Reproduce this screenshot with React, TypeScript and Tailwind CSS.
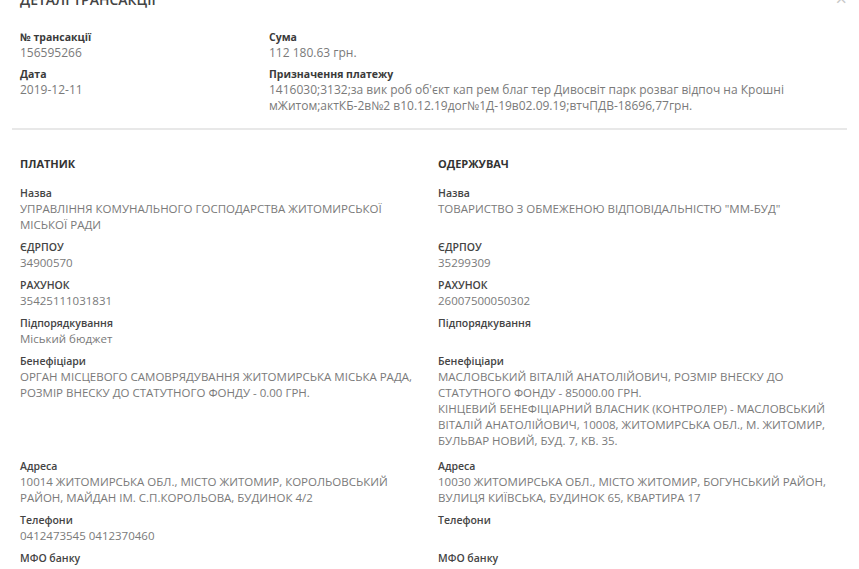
import React from "react";

type Field = { label: string; value?: string[] };

const topLeft: Field[] = [
  { label: "№ трансакції", value: ["156595266"] },
  { label: "Дата", value: ["2019-12-11"] },
];

const topRight: Field[] = [
  { label: "Сума", value: ["112 180.63 грн."] },
  {
    label: "Призначення платежу",
    value: [
      "1416030;3132;за вик роб об'єкт кап рем благ тер Дивосвіт парк розваг відпоч на Крошні мЖитом;актКБ-2в№2 в10.12.19дог№1Д-19в02.09.19;втчПДВ-18696,77грн.",
    ],
  },
];

const rows: [Field, Field][] = [
  [
    { label: "Назва", value: ["УПРАВЛІННЯ КОМУНАЛЬНОГО ГОСПОДАРСТВА ЖИТОМИРСЬКОЇ МІСЬКОЇ РАДИ"] },
    { label: "Назва", value: ['ТОВАРИСТВО З ОБМЕЖЕНОЮ ВІДПОВІДАЛЬНІСТЮ "ММ-БУД"'] },
  ],
  [
    { label: "ЄДРПОУ", value: ["34900570"] },
    { label: "ЄДРПОУ", value: ["35299309"] },
  ],
  [
    { label: "РАХУНОК", value: ["35425111031831"] },
    { label: "РАХУНОК", value: ["26007500050302"] },
  ],
  [
    { label: "Підпорядкування", value: ["Міський бюджет"] },
    { label: "Підпорядкування" },
  ],
  [
    {
      label: "Бенефіціари",
      value: ["ОРГАН МІСЦЕВОГО САМОВРЯДУВАННЯ ЖИТОМИРСЬКА МІСЬКА РАДА, РОЗМІР ВНЕСКУ ДО СТАТУТНОГО ФОНДУ - 0.00 ГРН."],
    },
    {
      label: "Бенефіціари",
      value: [
        "МАСЛОВСЬКИЙ ВІТАЛІЙ АНАТОЛІЙОВИЧ, РОЗМІР ВНЕСКУ ДО СТАТУТНОГО ФОНДУ - 85000.00 ГРН.",
        "КІНЦЕВИЙ БЕНЕФІЦІАРНИЙ ВЛАСНИК (КОНТРОЛЕР) - МАСЛОВСЬКИЙ ВІТАЛІЙ АНАТОЛІЙОВИЧ, 10008, ЖИТОМИРСЬКА ОБЛ., М. ЖИТОМИР, БУЛЬВАР НОВИЙ, БУД. 7, КВ. 35.",
      ],
    },
  ],
  [
    {
      label: "Адреса",
      value: ["10014 ЖИТОМИРСЬКА ОБЛ., МІСТО ЖИТОМИР, КОРОЛЬОВСЬКИЙ РАЙОН, МАЙДАН ІМ. С.П.КОРОЛЬОВА, БУДИНОК 4/2"],
    },
    {
      label: "Адреса",
      value: ["10030 ЖИТОМИРСЬКА ОБЛ., МІСТО ЖИТОМИР, БОГУНСЬКИЙ РАЙОН, ВУЛИЦЯ КИЇВСЬКА, БУДИНОК 65, КВАРТИРА 17"],
    },
  ],
  [
    { label: "Телефони", value: ["0412473545 0412370460"] },
    { label: "Телефони" },
  ],
  [
    { label: "МФО банку", value: ["Державна казначейська служба України (820172)"] },
    { label: "МФО банку", value: ['ПАТ КБ "ПРИВАТБАНК" (305299)'] },
  ],
];

const TopField = ({ f }: { f: Field }) => (
  <div>
    <div className="text-[10.5px] leading-[15px] font-bold text-[#3a3a3a]">{f.label}</div>
    {f.value?.map((v, i) => (
      <div key={i} className="text-[12px] leading-[16px] text-[#7a7a7a]">
        {v}
      </div>
    ))}
  </div>
);

const Cell = ({ f }: { f: Field }) => (
  <div className={f.label === "Бенефіціари" ? "mb-[3px]" : ""}>
    <div className="text-[10.5px] leading-[15px] font-semibold text-[#444]">{f.label}</div>
    {f.value ? (
      f.value.map((v, i) => (
        <div key={i} className="text-[11.5px] leading-[16px] text-[#7a7a7a]">
          {v}
        </div>
      ))
    ) : (
      <div className="h-[16px]" />
    )}
  </div>
);

const App = () => {
  return (
    <div className="relative h-[569px] w-[859px] overflow-hidden bg-white font-['Open_Sans',sans-serif]">
      <button className="absolute right-[12px] top-[-11px] text-[20px] leading-[20px] text-[#c8c8c8]">
        ×
      </button>
      <div className="-mt-[9px] px-5 text-[14px] leading-[17px] font-semibold uppercase text-[#444]">
        Деталі трансакції
      </div>

      <div className="mt-[22px] grid grid-cols-[249px_1fr] px-5 pr-[40px]">
        <div className="flex flex-col gap-[6px]">
          {topLeft.map((f) => (
            <TopField key={f.label} f={f} />
          ))}
        </div>
        <div className="flex flex-col gap-[6px]">
          {topRight.map((f) => (
            <TopField key={f.label} f={f} />
          ))}
        </div>
      </div>

      <div className="mx-3 mt-[14px] border-t-2 border-[#e8e8e8]" />

      <div className="mt-[26px] grid grid-cols-[418px_1fr] px-5 pr-[20px]">
        <div className="text-[11px] leading-[15px] font-bold uppercase text-[#333]">Платник</div>
        <div className="text-[11px] leading-[15px] font-bold uppercase text-[#333]">Одержувач</div>
      </div>

      <div className="mt-[15px] grid grid-cols-[418px_1fr] gap-y-[7px] px-5 pr-[20px]">
        {rows.map(([l, r], i) => (
          <React.Fragment key={i}>
            <div className="pr-[10px]">
              <Cell f={l} />
            </div>
            <Cell f={r} />
          </React.Fragment>
        ))}
      </div>
    </div>
  );
};

export default App;
